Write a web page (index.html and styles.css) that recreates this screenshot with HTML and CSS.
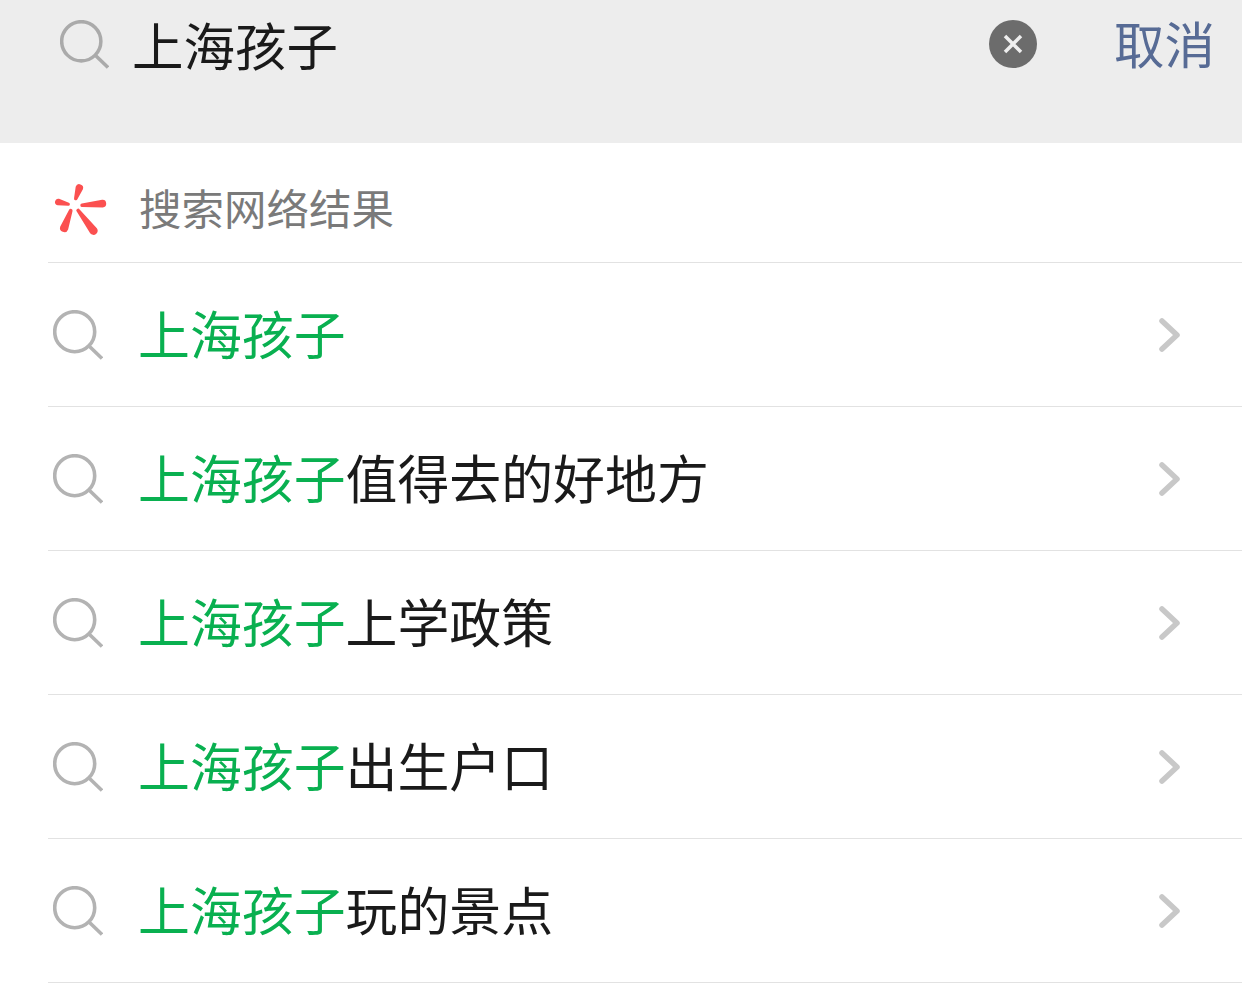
FILE: index.html
```html
<!DOCTYPE html>
<html lang="zh-CN">
<head>
<meta charset="utf-8">
<title>搜索</title>
<link rel="stylesheet" href="styles.css">
</head>
<body>
<header class="search-bar">
  <svg class="search-icon top-icon" viewBox="0 0 50 50"><circle cx="21.700" cy="21.700" r="20"/><path d="M35.500 35.500 49 48.500"/></svg>
  <div class="query">上海孩子</div>
  <svg class="clear" viewBox="0 0 48 48"><circle cx="24" cy="24" r="24"/><path d="M16 16 32 32M32 16 16 32"/></svg>
  <div class="cancel">取消</div>
</header>
<main class="list">
  <div class="section-head">
    <svg class="logo" viewBox="52 182 56 52">
      <path d="M77.51 198.07 82.91 188.20A3.800 3.800 0 0 0 75.69 185.80L74.09 196.93A1.800 1.800 0 0 0 77.51 198.07Z"/>
      <path d="M68.83 201.84 59.03 197.78A3.300 3.300 0 0 0 57.57 204.22L68.17 204.76A1.500 1.500 0 0 0 68.83 201.84Z"/>
      <path d="M82.15 206.09 102.72 206.39A3.800 3.800 0 0 0 102.08 198.81L81.85 202.51A1.800 1.800 0 0 0 82.15 206.09Z"/>
      <path d="M69.12 208.86 60.27 225.52A4.200 4.200 0 0 0 68.13 228.48L72.48 210.14A1.800 1.800 0 0 0 69.12 208.86Z"/>
      <path d="M76.76 210.59 90.15 232.24A4.200 4.200 0 0 0 96.85 227.16L79.64 208.41A1.800 1.800 0 0 0 76.76 210.59Z"/>
    </svg>
    <span class="section-title">搜索网络结果</span>
  </div>
  <a class="row">
    <svg class="search-icon" viewBox="0 0 50 50"><circle cx="21.700" cy="21.700" r="20"/><path d="M35.500 35.500 49 48.500"/></svg>
    <span class="text"><em>上海孩子</em></span>
    <svg class="chevron" viewBox="0 0 24 36"><path d="M4 4 19 18 4 32"/></svg>
  </a>
  <a class="row">
    <svg class="search-icon" viewBox="0 0 50 50"><circle cx="21.700" cy="21.700" r="20"/><path d="M35.500 35.500 49 48.500"/></svg>
    <span class="text"><em>上海孩子</em>值得去的好地方</span>
    <svg class="chevron" viewBox="0 0 24 36"><path d="M4 4 19 18 4 32"/></svg>
  </a>
  <a class="row">
    <svg class="search-icon" viewBox="0 0 50 50"><circle cx="21.700" cy="21.700" r="20"/><path d="M35.500 35.500 49 48.500"/></svg>
    <span class="text"><em>上海孩子</em>上学政策</span>
    <svg class="chevron" viewBox="0 0 24 36"><path d="M4 4 19 18 4 32"/></svg>
  </a>
  <a class="row">
    <svg class="search-icon" viewBox="0 0 50 50"><circle cx="21.700" cy="21.700" r="20"/><path d="M35.500 35.500 49 48.500"/></svg>
    <span class="text"><em>上海孩子</em>出生户口</span>
    <svg class="chevron" viewBox="0 0 24 36"><path d="M4 4 19 18 4 32"/></svg>
  </a>
  <a class="row">
    <svg class="search-icon" viewBox="0 0 50 50"><circle cx="21.700" cy="21.700" r="20"/><path d="M35.500 35.500 49 48.500"/></svg>
    <span class="text"><em>上海孩子</em>玩的景点</span>
    <svg class="chevron" viewBox="0 0 24 36"><path d="M4 4 19 18 4 32"/></svg>
  </a>
</main>
</body>
</html>
```
FILE: styles.css
```css
* { box-sizing: border-box; }
html, body { margin: 0; padding: 0; }
body {
  width: 1242px;
  height: 998px;
  overflow: hidden;
  background: #fff;
  font-family: "Noto Sans CJK SC", "Noto Sans", sans-serif;
  font-weight: 400;
  color: #1a1a1a;
}
.search-bar {
  height: 143px;
  background: #ededed;
  display: flex;
  align-items: flex-start;
  padding: 16px 0 0 60px;
}
.search-icon {
  width: 50px;
  height: 50px;
  flex: none;
  fill: none;
  stroke: #b3b3b3;
  stroke-width: 3.600;
  margin-top: 1px;
}
.search-bar .top-icon {
  stroke: #aaa;
  width: 49px;
  height: 49px;
  margin-top: 4px;
}
.query {
  margin-left: 23px;
  font-size: 51.500px;
  line-height: 56px;
  width: 857px;
}
.clear {
  width: 48px;
  height: 48px;
  flex: none;
  margin-top: 3.500px;
}
.clear circle { fill: #6c6c6c; }
.clear path { fill: none; stroke: #eee; stroke-width: 3.500; }
.cancel {
  margin-left: 77px;
  margin-top: -2px;
  font-size: 50.500px;
  line-height: 56px;
  color: #576b95;
}
.list { margin-left: 48px; }
.section-head {
  height: 120px;
  display: flex;
  align-items: center;
  border-bottom: 1px solid #e2e2e2;
  padding: 8px 0 0 4px;
}
.logo {
  width: 56px;
  height: 52px;
  flex: none;
  fill: #fb5050;
  margin-top: 4px;
}
.section-title {
  margin-left: 31px;
  font-size: 42.500px;
  color: #7a7a7a;
}
.row {
  height: 144px;
  display: flex;
  align-items: center;
  border-bottom: 1px solid #e2e2e2;
  padding-left: 5px;
}
.text {
  margin-left: 35px;
  font-size: 51.900px;
  line-height: 60px;
  padding-bottom: 3px;
  flex: 1;
}
.text em {
  font-style: normal;
  color: #09b050;
}
.chevron {
  width: 24px;
  height: 36px;
  flex: none;
  margin-top: 1px;
  margin-right: 60px;
  fill: none;
  stroke: #c8c8c8;
  stroke-width: 5.500;
  stroke-linecap: round;
  stroke-linejoin: round;
}
```
